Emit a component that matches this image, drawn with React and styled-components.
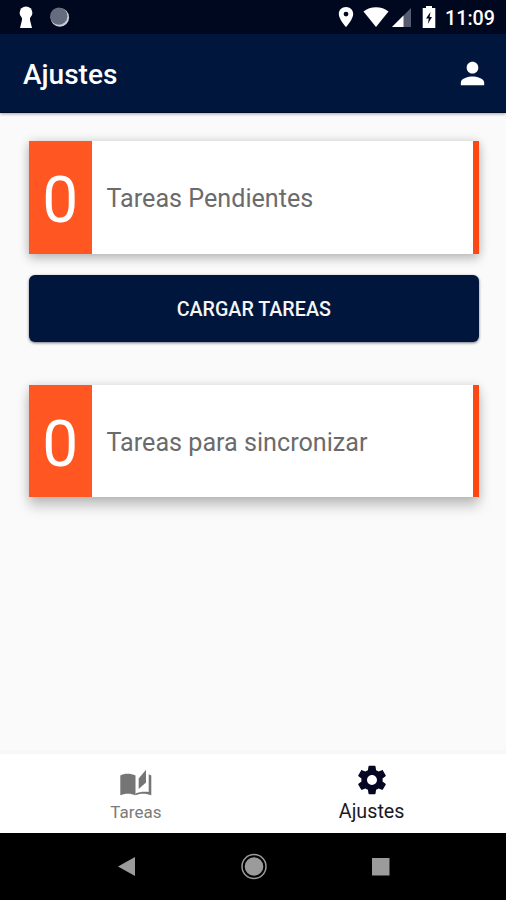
import styled, { createGlobalStyle } from "styled-components";

const GlobalStyle = createGlobalStyle`
  body {
    margin: 0;
    font-family: Roboto, "Liberation Sans", sans-serif;
    background-color: #fafafa;
  }
`;

const Screen = styled.div`
  display: flex;
  flex-direction: column;
  width: 506px;
  height: 900px;
  overflow: hidden;
  background-color: #fafafa;
`;

const StatusBar = styled.div`
  display: flex;
  align-items: center;
  flex: none;
  height: 34px;
  box-sizing: border-box;
  padding: 0 11px 0 18px;
  background-color: #000820;
`;

const StatusIcon = styled.svg`
  display: block;
  flex: none;
  width: ${({ $width }) => $width}px;
  height: 24px;
  margin-left: ${({ $gap = 0 }) => $gap}px;
`;

const Spacer = styled.div`
  flex: 1;
`;

const Clock = styled.span`
  margin-left: 9px;
  padding-top: 3px;
  color: white;
  font-size: 19.7px;
  font-weight: 500;
  line-height: 24px;
`;

const Header = styled.header`
  display: flex;
  align-items: center;
  justify-content: space-between;
  flex: none;
  height: 79px;
  box-sizing: border-box;
  padding: 0 16px 0 23px;
  background-color: #00163c;
  border-bottom: 1px solid #000c28;
  box-shadow: 0 1px 3px rgb(0 0 0 / 35%);
`;

const Title = styled.h1`
  margin: 4px 0 0;
  color: white;
  font-size: 28px;
  font-weight: 500;
  line-height: 34px;
`;

const Icon = styled.svg`
  display: block;
  width: ${({ $size }) => $size}px;
  height: ${({ $size }) => $size}px;
  fill: ${({ $color }) => $color};
`;

const Content = styled.main`
  flex: 1;
  padding: 28px 27px 0 28.5px;
`;

const Card = styled.section`
  display: flex;
  height: 112.5px;
  background-color: white;
  box-shadow: ${({ $raised }) =>
    $raised
      ? "0 9px 12px rgb(0 0 0 / 22%), 0 0 9px rgb(0 0 0 / 13%)"
      : "0 5px 10px rgb(0 0 0 / 20%), 0 0 10px rgb(0 0 0 / 14%)"};
`;

const Count = styled.div`
  width: 63.5px;
  background-color: #ff5622;
  color: white;
  font-size: 64px;
  line-height: 120px;
  text-align: center;
`;

const Label = styled.div`
  flex: 1;
  padding: 1px 0 0 14.5px;
  color: #6b6b6b;
  font-size: 25.15px;
  line-height: 114px;
  border-right: 6px solid #ff4713;
`;

const Button = styled.button`
  display: block;
  width: 100%;
  height: 66.5px;
  margin: 21.5px 0 43px;
  padding: 2px 0 0;
  border: 0;
  border-radius: 6px;
  background-color: #00163c;
  box-shadow: 0 1px 3px rgb(0 0 30 / 55%);
  color: #f5f5f5;
  font-family: inherit;
  font-size: 19.7px;
  font-weight: 500;
`;

const Tabs = styled.nav`
  display: flex;
  flex: none;
  height: 79px;
  background-color: white;
  border-top: 4px solid #f7f7f7;
  box-sizing: content-box;
  padding: 0 16.5px 0 18px;
`;

const Tab = styled.div`
  display: flex;
  flex: 1;
  flex-direction: column;
  align-items: center;
  padding-top: ${({ $active }) => ($active ? 9 : 12)}px;
  color: ${({ $active }) => ($active ? "#1a1a1f" : "#7a7a7a")};
  font-size: ${({ $active }) => ($active ? 19.7 : 17)}px;
  line-height: ${({ $active }) => ($active ? 30 : 25)}px;
`;

const SystemNav = styled.div`
  display: flex;
  align-items: center;
  justify-content: center;
  gap: 99px;
  flex: none;
  height: 67px;
  box-sizing: border-box;
  padding-left: 1px;
  background-color: black;
`;

const StatusIcons = () => (
  <>
    <StatusIcon $width={16} viewBox="0 0 16 24" fill="white">
      <circle cx="8" cy="7.8" r="6.4" />
      <path d="M4 10h8v5l2 8H2l2-8z" />
    </StatusIcon>
    <StatusIcon $width={22} $gap={15} viewBox="0 0 22 24">
      <circle cx="10.8" cy="12.4" r="9.3" fill="#c9ced7" />
      <circle cx="9.8" cy="11.2" r="8.6" fill="#656c7d" />
    </StatusIcon>
    <Spacer />
    <StatusIcon $width={16} viewBox="0 0 16 24" fill="white">
      <path
        fillRule="evenodd"
        d="M8 2C3.8 2 .8 5 .8 9.1.8 14.3 8 22.2 8 22.2s7.2-7.9 7.2-13.1C15.2 5 12.2 2 8 2zm0 4.700a2.400 2.400 0 1 1 0 4.800 2.400 2.400 0 0 1 0-4.800z"
      />
    </StatusIcon>
    <StatusIcon $width={26} $gap={9} viewBox="0 0 26 24" fill="white">
      <path d="M.5 6.600C7 .9 19 .9 25.500 6.600L13 22z" />
    </StatusIcon>
    <StatusIcon $width={21} $gap={2} viewBox="0 0 21 24">
      <path d="M20 3v19H1z" fill="#565c70" />
      <path d="M12.500 10.500V22H1z" fill="white" />
    </StatusIcon>
    <StatusIcon $width={14} $gap={10} viewBox="0 0 14 24">
      <path d="M4 1h6v2h3.300v20H.7V3H4z" fill="white" />
      <path d="M8.500 7L4 13.500h2.800l-1 5.500L10 12H7.600z" fill="#000820" />
    </StatusIcon>
  </>
);

const PersonIcon = () => (
  <Icon $size={35} $color="white" viewBox="0 0 24 24">
    <path d="M12 12c2.210 0 4-1.790 4-4s-1.790-4-4-4-4 1.790-4 4 1.790 4 4 4zm0 2c-2.670 0-8 1.340-8 4v2h16v-2c0-2.660-5.330-4-8-4z" />
  </Icon>
);

const BookIcon = () => (
  <Icon $size={34} $color="#757575" viewBox="0 0 34 34">
    <path d="M1.300 9.500C5 7.200 12 7.200 16.500 9.500V29.300C12 27 5 27.300 1.300 29.300z" />
    <path d="M16.500 29.300C20 27.200 28 27.200 32.300 29.300V9.500L29.700 8.200V26C26 25.200 20 25.800 16.500 27.500z" />
    <path d="M19.700 12.500L27 3.800V16.500L19.700 23z" />
  </Icon>
);

const GearIcon = () => (
  <Icon $size={34} $color="#050622" viewBox="0 0 24 24">
    <path d="M19.430 12.980c.040-.320.070-.640.070-.980s-.030-.660-.070-.980l2.110-1.650c.190-.150.240-.420.120-.640l-2-3.460c-.120-.220-.390-.300-.610-.220l-2.490 1c-.520-.400-1.080-.730-1.690-.980l-.380-2.650C14.460 2.180 14.250 2 14 2h-4c-.250 0-.460.180-.490.420l-.380 2.650c-.610.250-1.170.590-1.690.980l-2.490-1c-.230-.090-.490 0-.610.220l-2 3.460c-.130.220-.070.490.120.640l2.110 1.650c-.040.320-.070.650-.070.980s.030.660.070.980l-2.110 1.650c-.190.150-.240.420-.120.640l2 3.460c.120.220.390.300.610.220l2.490-1c.520.400 1.080.730 1.690.980l.380 2.650c.030.240.240.420.490.420h4c.250 0 .460-.180.490-.420l.380-2.650c.610-.250 1.170-.590 1.690-.980l2.490 1c.230.090.490 0 .610-.220l2-3.460c.120-.220.070-.490-.120-.640l-2.110-1.650zM12 15.500c-1.930 0-3.500-1.570-3.500-3.500s1.570-3.500 3.500-3.500 3.500 1.570 3.500 3.500-1.570 3.500-3.500 3.500z" />
  </Icon>
);

const CounterCard = ({ count, label, raised }) => (
  <Card $raised={raised}>
    <Count>{count}</Count>
    <Label>{label}</Label>
  </Card>
);

const App = () => (
  <>
    <GlobalStyle />
    <Screen>
      <StatusBar>
        <StatusIcons />
        <Clock>11:09</Clock>
      </StatusBar>
      <Header>
        <Title>Ajustes</Title>
        <PersonIcon />
      </Header>
      <Content>
        <CounterCard count={0} label="Tareas Pendientes" />
        <Button type="button">CARGAR TAREAS</Button>
        <CounterCard count={0} label="Tareas para sincronizar" raised />
      </Content>
      <Tabs>
        <Tab>
          <BookIcon />
          Tareas
        </Tab>
        <Tab $active>
          <GearIcon />
          Ajustes
        </Tab>
      </Tabs>
      <SystemNav>
        <Icon $size={28} $color="#9b9b9b" viewBox="0 0 28 28">
          <path d="M5 13.500L22 4v19z" />
        </Icon>
        <Icon $size={28} $color="#9b9b9b" viewBox="0 0 28 28">
          <circle cx="14" cy="13.500" r="9.300" />
          <circle cx="14" cy="13.500" r="12" fill="none" stroke="#9b9b9b" strokeWidth="1.500" />
        </Icon>
        <Icon $size={28} $color="#9b9b9b" viewBox="0 0 28 28">
          <path d="M5 5h17.500v17.500H5z" />
        </Icon>
      </SystemNav>
    </Screen>
  </>
);

export default App;
